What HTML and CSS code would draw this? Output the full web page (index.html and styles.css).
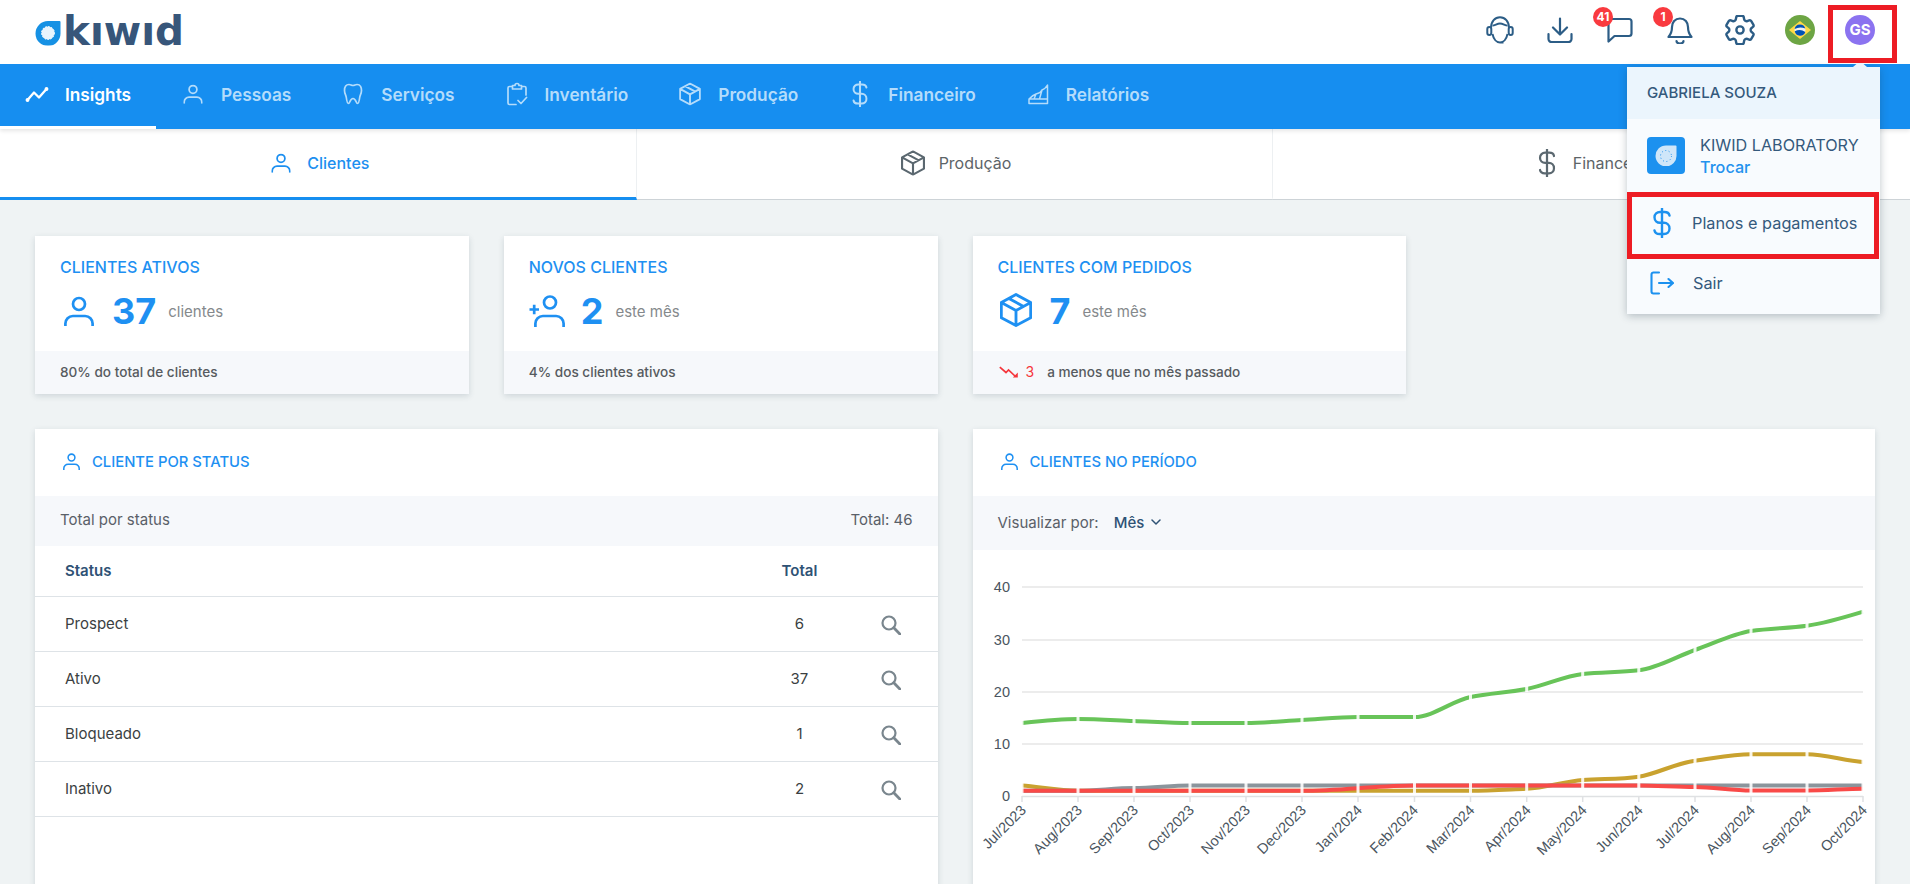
FILE: index.html
```html
<!DOCTYPE html>
<html lang="pt-BR">
<head>
<meta charset="utf-8">
<title>Kiwid - Insights</title>
<link rel="stylesheet" href="styles.css">
</head>
<body>
<svg class="sprite" aria-hidden="true">
  <symbol id="i-person" viewBox="0 0 30 30"><circle cx="15" cy="8" r="6" fill="none" stroke="currentColor" stroke-width="2.7"/><path d="M1.4 30v-2.5a7.5 7.5 0 0 1 7.5-7.5h12.200a7.500 7.500 0 0 1 7.500 7.500V30" fill="none" stroke="currentColor" stroke-width="2.7"/></symbol>
  <symbol id="i-box" viewBox="0 0 34 36"><path d="M17 1.600 32.500 10v16L17 34.400 1.500 26V10zM1.500 10 17 18.500 32.500 10M17 18.500v15.900M9.500 5.800 24.500 14" fill="none" stroke="currentColor" stroke-width="3" stroke-linejoin="round"/></symbol>
  <symbol id="i-dollar" viewBox="0 0 18 30"><path d="M16.500 7.500C16 5 14 4 11.500 4H7C4 4 1.500 6 1.500 9.300S4 14.800 7 14.800h4c3 0 5.500 2.200 5.500 5.700S14 26 11 26H6.500C4 26 2 25 1.500 22.500M9 .5v29" fill="none" stroke="currentColor" stroke-width="2.400" stroke-linecap="round"/></symbol>
  <symbol id="i-search" viewBox="0 0 20 20"><circle cx="8" cy="8" r="6.500" fill="none" stroke="currentColor" stroke-width="2.200"/><path d="m12.800 12.800 6.200 6.400" fill="none" stroke="currentColor" stroke-width="2.800" stroke-linecap="round"/></symbol>
  <symbol id="i-drop" viewBox="0 0 26 25"><path d="M13 .500h11.500a1 1 0 0 1 1 1V12.500A12.500 12.500 0 1 1 13 .500z" fill="currentColor"/></symbol>
</svg>

<header class="topbar">
  <a class="logo" aria-label="Kiwid">
    <svg width="156" height="48" viewBox="35 6 156 48">
      <use href="#i-drop" x="35" y="20.500" width="26" height="25" class="logo-drop"/>
      <circle cx="48" cy="33" r="6.500" fill="#e8f4fd" stroke="#ffffff" stroke-width="1" stroke-dasharray="1.500 1.500"/>
      <text x="63" y="45" class="logo-word">kıwıd</text>
    </svg>
  </a>
  <div class="top-icons">
    <span class="top-icon">
      <svg width="28" height="28" viewBox="0 0 28 28" fill="none" stroke="currentColor" stroke-width="2"><path d="M5 12C5 5.500 9 1.300 14 1.300S23 5.500 23 12"/><rect x="1.300" y="11" width="4" height="8" rx="2"/><rect x="22.700" y="11" width="4" height="8" rx="2"/><path d="M6.500 9.500C9 9.500 11 7.500 14 7.500S19 9.500 21.500 9.500M6.500 18c1 5 4 8.500 7.500 8.500S20.500 23 21.500 18M14 26.500h3.500"/></svg>
    </span>
    <span class="top-icon">
      <svg width="26" height="26" viewBox="0 0 26 26" fill="none" stroke="currentColor" stroke-width="2.200" stroke-linecap="round" stroke-linejoin="round"><path d="M13 1.500V17M6 10.500l7 7 7-7M1.500 17v5a3 3 0 0 0 3 3h17a3 3 0 0 0 3-3v-5"/></svg>
    </span>
    <span class="top-icon">
      <svg width="26" height="26" viewBox="0 0 26 26" fill="none" stroke="currentColor" stroke-width="2.200" stroke-linejoin="round"><path d="M1.500 24.500V4.500a2.500 2.500 0 0 1 2.500-2.500h18a2.500 2.500 0 0 1 2.500 2.500v12a2.500 2.500 0 0 1-2.500 2.500H7.500z"/></svg>
      <b class="badge">41</b>
    </span>
    <span class="top-icon">
      <svg width="26" height="27" viewBox="0 0 26 27" fill="none" stroke="currentColor" stroke-width="2.200" stroke-linejoin="round" stroke-linecap="round"><path d="M13 1.500c-5 0-8 4-8 8.500 0 5-1 7-3.500 10h23C22 17 21 15 21 10c0-4.500-3-8.500-8-8.500zM9.500 24a3.500 2.500 0 0 0 7 0"/></svg>
      <b class="badge">1</b>
    </span>
    <span class="top-icon">
      <svg width="30" height="30" viewBox="2.500 2.500 19 19" fill="none" stroke="currentColor" stroke-width="1.500"><path d="M9.594 3.940c.09-.542.56-.94 1.110-.94h2.593c.55 0 1.020.398 1.110.94l.213 1.281c.063.374.313.686.645.870.074.040.147.083.22.127.324.196.72.257 1.075.124l1.217-.456a1.125 1.125 0 0 1 1.370.49l1.296 2.247a1.125 1.125 0 0 1-.26 1.431l-1.003.827c-.293.24-.438.613-.431.992a6.759 6.759 0 0 1 0 .255c-.007.378.138.75.43.99l1.005.828c.424.35.534.954.26 1.430l-1.298 2.247a1.125 1.125 0 0 1-1.369.491l-1.217-.456c-.355-.133-.75-.072-1.076.124a6.570 6.570 0 0 1-.22.128c-.331.183-.581.495-.644.869l-.213 1.280c-.09.543-.56.941-1.110.941h-2.594c-.55 0-1.020-.398-1.110-.94l-.213-1.281c-.062-.374-.312-.686-.644-.87a6.520 6.520 0 0 1-.22-.127c-.325-.196-.72-.257-1.076-.124l-1.217.456a1.125 1.125 0 0 1-1.369-.49l-1.297-2.247a1.125 1.125 0 0 1 .26-1.431l1.004-.827c.292-.24.437-.613.43-.992a6.932 6.932 0 0 1 0-.255c.007-.378-.138-.75-.43-.99l-1.004-.828a1.125 1.125 0 0 1-.26-1.430l1.297-2.247a1.125 1.125 0 0 1 1.370-.491l1.216.456c.356.133.751.072 1.076-.124.072-.044.146-.087.22-.128.332-.183.582-.495.644-.869l.214-1.281z"/><circle cx="12" cy="12" r="2.300"/></svg>
    </span>
    <span class="top-icon">
      <svg width="30" height="30" viewBox="0 0 30 30"><circle cx="15" cy="15" r="15" fill="#6da544"/><path d="M15 6 26 15 15 24 4 15z" fill="#ffda44"/><circle cx="15" cy="15" r="5.500" fill="#f0f0f0"/><path d="M9.600 14a5.500 5.500 0 0 1 10.700-.5A12 12 0 0 0 9.600 14zM9.700 16.300a10 10 0 0 1 10.600.6 5.500 5.500 0 0 1-10.600-.6z" fill="#0052b4"/></svg>
    </span>
    <span class="top-icon"><span class="avatar">GS</span></span>
  </div>

  <div class="menu">
    <div class="menu-name">GABRIELA SOUZA</div>
    <div class="menu-company">
      <span class="company-logo">
        <svg width="26" height="25" class="company-drop"><use href="#i-drop"/></svg>
        <svg class="company-dots" width="14" height="14" viewBox="0 0 14 14"><circle cx="7" cy="7" r="5.500" fill="none" stroke="#1c91ef" stroke-width="1" stroke-dasharray="1 2.500"/></svg>
      </span>
      <span class="company-text"><span>KIWID LABORATORY</span><a>Trocar</a></span>
    </div>
    <div class="menu-item">
      <svg class="menu-icon" width="18" height="30"><use href="#i-dollar"/></svg>
      <span>Planos e pagamentos</span>
    </div>
    <div class="menu-item menu-last">
      <svg class="menu-icon" width="24" height="24" viewBox="0 0 24 24" fill="none" stroke="currentColor" stroke-width="2.100" stroke-linecap="round" stroke-linejoin="round"><path d="M9 1.500H3.500a2 2 0 0 0-2 2v17a2 2 0 0 0 2 2H9M9 12h14M18.500 8l4.500 4-4.500 4"/></svg>
      <span>Sair</span>
    </div>
  </div>
  <i class="mark mark-avatar"></i>
  <i class="mark mark-plans"></i>
</header>

<nav class="nav">
  <a class="nav-item active">
    <svg class="nav-icon" viewBox="0 0 24 24" fill="none" stroke="currentColor" stroke-width="2.300" stroke-linecap="round" stroke-linejoin="round"><path d="M2.500 18 9 10.500l5 5 7.500-8.500"/><circle cx="2.500" cy="18" r=".8"/><circle cx="21.500" cy="7" r=".8"/></svg>
    Insights
  </a>
  <a class="nav-item"><svg class="nav-icon" viewBox="-3.500 -3.500 37 37"><use href="#i-person" width="30" height="30"/></svg>Pessoas</a>
  <a class="nav-item">
    <svg class="nav-icon" viewBox="0 0 24 24" fill="none" stroke="currentColor" stroke-width="1.700" stroke-linejoin="round"><path d="M8 2.500C4.500 2.500 3.500 5.500 3.500 8.500c0 3 1.500 4.500 1.800 7 .4 3 1 6 2.200 6 1.500 0 1.500-5 4.500-5s3 5 4.500 5c1.200 0 1.800-3 2.200-6 .3-2.500 1.800-4 1.800-7 0-3-1-6-4.500-6-1.500 0-2.500 1-4 1s-2.500-1-4-1z"/></svg>
    Serviços
  </a>
  <a class="nav-item">
    <svg class="nav-icon" viewBox="0 0 24 24" fill="none" stroke="currentColor" stroke-width="1.700" stroke-linecap="round" stroke-linejoin="round"><path d="M7.500 4.500H4.500a1.500 1.500 0 0 0-1.500 1.500v15a1.500 1.500 0 0 0 1.500 1.500H11M16.500 4.500h3A1.500 1.500 0 0 1 21 6v7M7.500 3.500h2.500a2 2 0 0 1 4 0h2.500v3.500h-9zM13 18.500l3 3 5.500-6"/></svg>
    Inventário
  </a>
  <a class="nav-item"><svg class="nav-icon" viewBox="-1.750 -.75 37.500 37.500"><use href="#i-box" width="34" height="36"/></svg>Produção</a>
  <a class="nav-item"><svg class="nav-icon tall" viewBox="0 0 18 30"><use href="#i-dollar" width="18" height="30"/></svg>Financeiro</a>
  <a class="nav-item">
    <svg class="nav-icon" viewBox="0 0 24 24" fill="none" stroke="currentColor" stroke-width="1.500" stroke-linejoin="round"><path d="M3 21.500h18.500V3c-2 3.500-3 4-5.500 5-1.500 3-3 3.500-6 4-3 1-5 3-7 5zM3 17h18.500M10 12l-2 5M16 8l-2.500 9"/></svg>
    Relatórios
  </a>
</nav>

<div class="tabs">
  <a class="tab current"><svg class="tab-icon" viewBox="-3.500 -3.500 37 37"><use href="#i-person" width="30" height="30"/></svg>Clientes</a>
  <a class="tab"><svg class="tab-icon tab-gray tall" viewBox="0 0 34 36"><use href="#i-box" width="34" height="36"/></svg>Produção</a>
  <a class="tab"><svg class="tab-icon tab-gray tall" viewBox="0 0 18 30"><use href="#i-dollar" width="18" height="30"/></svg>Financeiro</a>
</div>

<main class="dash">
  <section class="card">
    <div class="card-main">
      <h3 class="card-title">CLIENTES ATIVOS</h3>
      <div class="card-value">
        <svg class="card-icon" viewBox="-4 -3 36 36"><use href="#i-person" width="30" height="30"/></svg>
        <strong>37</strong><span>clientes</span>
      </div>
    </div>
    <div class="card-foot">80% do total de clientes</div>
  </section>
  <section class="card">
    <div class="card-main">
      <h3 class="card-title">NOVOS CLIENTES</h3>
      <div class="card-value">
        <svg class="card-icon" viewBox="0 0 36 36" fill="none" stroke="currentColor" stroke-width="2.700"><circle cx="21" cy="9.500" r="6"/><path d="M6.400 34v-3.500a7.500 7.500 0 0 1 7.500-7.500h13.200a7.500 7.500 0 0 1 7.500 7.500V34M.5 16.500h9.500M5.200 11.800v9.500"/></svg>
        <strong>2</strong><span>este mês</span>
      </div>
    </div>
    <div class="card-foot">4% dos clientes ativos</div>
  </section>
  <section class="card">
    <div class="card-main">
      <h3 class="card-title">CLIENTES COM PEDIDOS</h3>
      <div class="card-value">
        <svg class="card-icon" viewBox="-2 0 38 38"><use href="#i-box" width="34" height="36"/></svg>
        <strong>7</strong><span>este mês</span>
      </div>
    </div>
    <div class="card-foot">
      <svg class="trend" width="20" height="12" viewBox="0 0 20 12" fill="none" stroke="currentColor" stroke-width="1.700"><path d="M.8 1.200 7 6.500l2.500-2.500 7 6.500"/><path d="M18.800 6.500v5h-5z" fill="currentColor" stroke="none"/></svg>
      <span class="trend-num">3</span>a menos que no mês passado
    </div>
  </section>

  <section class="panel panel-left">
    <h3 class="panel-title"><svg viewBox="0 0 30 30" width="17" height="17"><use href="#i-person"/></svg>CLIENTE POR STATUS</h3>
    <div class="panel-bar"><span>Total por status</span><span>Total: 46</span></div>
    <table class="status-table">
      <thead><tr><th>Status</th><th class="num">Total</th><th class="act"></th></tr></thead>
      <tbody>
        <tr><td>Prospect</td><td class="num">6</td><td class="act"><svg width="20" height="20"><use href="#i-search"/></svg></td></tr>
        <tr><td>Ativo</td><td class="num">37</td><td class="act"><svg width="20" height="20"><use href="#i-search"/></svg></td></tr>
        <tr><td>Bloqueado</td><td class="num">1</td><td class="act"><svg width="20" height="20"><use href="#i-search"/></svg></td></tr>
        <tr><td>Inativo</td><td class="num">2</td><td class="act"><svg width="20" height="20"><use href="#i-search"/></svg></td></tr>
      </tbody>
    </table>
  </section>

  <section class="panel panel-right">
    <h3 class="panel-title"><svg viewBox="0 0 30 30" width="17" height="17"><use href="#i-person"/></svg>CLIENTES NO PERÍODO</h3>
    <div class="panel-bar panel-bar-tall"><span>Visualizar por:</span>
      <span class="select">Mês<svg width="10" height="6" viewBox="0 0 10 6" fill="none" stroke="currentColor" stroke-width="1.500" stroke-linecap="round" stroke-linejoin="round"><path d="m1 1 4 4 4-4"/></svg></span>
    </div>
    <svg class="chart" width="902" height="334" viewBox="973 550 902 334">
      <g class="grid">
        <path d="M1022 587H1863M1022 640H1863M1022 692H1863M1022 744H1863"/>
        <path class="axis" d="M1022 796.500H1863M1022 796v6M1078 796v6M1134 796v6M1190 796v6M1246 796v6M1302 796v6M1358 796v6M1414.500 796v6M1470.500 796v6M1526.700 796v6M1582.700 796v6M1638.800 796v6M1695 796v6M1751 796v6M1807 796v6M1863 796v6"/>
      </g>
      <g class="y-labels">
        <text x="1010" y="592">40</text><text x="1010" y="645">30</text><text x="1010" y="697">20</text><text x="1010" y="749">10</text><text x="1010" y="801">0</text>
      </g>
      <path class="line gold" d="M1022 785.500C1040 787 1060 790.500 1078 790.800H1470.500C1489 790.800 1508 789.500 1526.700 788.700C1545 788 1564 781.500 1582.700 780C1601 778.500 1620 779.500 1638.800 776.700C1657 773.900 1676 763 1695 760.700C1713 758.500 1732 754.300 1751 754.300H1807C1825 754.300 1844 760.500 1863 762"/>
      <path class="line gray" d="M1022 790.800H1078C1096 790.800 1115 788 1134 788C1153 788 1171 785.500 1190 785.500H1863"/>
      <path class="line red" d="M1022 790.800H1302C1320 790.800 1340 789.500 1358 788.200C1376 787 1396 785.500 1414.500 785.500H1638.800C1657 785.500 1676 787 1695 787C1713 787 1732 790.500 1751 790.500H1807C1825 790.500 1844 789 1863 788.700"/>
      <path class="line green" d="M1022 723C1040.700 721 1059.300 719 1078 719C1096.700 719 1115.300 720.300 1134 721C1152.700 721.700 1171.300 723 1190 723C1208.700 723 1227.300 723 1246 723C1264.700 723 1283.300 721 1302 720C1320.700 719 1339.300 717 1358 717C1376.700 717 1395.800 717 1414.500 717C1433.200 717 1451.800 700.800 1470.500 697C1489.200 693.200 1508 692.500 1526.700 689C1545.400 685.500 1564 676 1582.700 674C1601.400 672 1620.100 672.400 1638.800 670.300C1657.500 668.200 1676.300 656.500 1695 650C1713.700 643.500 1732.300 633.800 1751 631C1769.700 628.200 1788.300 628.300 1807 625.700C1825.700 623.100 1844.300 617.400 1863 611.700"/>
      <path class="dots" d="M1022 720v6M1078 716v6M1134 718v6M1190 720v6M1246 720v6M1302 717v6M1358 714v6M1414.500 714v6M1470.500 694v6M1526.700 686v6M1582.700 671v6M1638.800 667v6M1695 647v6M1751 628v6M1807 623v6M1863 609v6"/>
      <path class="dots" d="M1022 783v11M1078 783v11M1134 783v11M1190 783v11M1246 783v11M1302 783v11M1358 783v11M1414.500 783v11M1470.500 783v11M1526.700 783v11M1582.700 777v17M1638.800 773v17M1695 758v6M1695 783v11M1751 751v6M1751 783v11M1807 751v6M1807 783v11M1863 759v6M1863 783v11"/>
      <g class="x-labels">
        <text transform="translate(1027 811) rotate(-45)">Jul/2023</text>
        <text transform="translate(1083 811) rotate(-45)">Aug/2023</text>
        <text transform="translate(1139 811) rotate(-45)">Sep/2023</text>
        <text transform="translate(1195 811) rotate(-45)">Oct/2023</text>
        <text transform="translate(1251 811) rotate(-45)">Nov/2023</text>
        <text transform="translate(1307 811) rotate(-45)">Dec/2023</text>
        <text transform="translate(1363 811) rotate(-45)">Jan/2024</text>
        <text transform="translate(1419 811) rotate(-45)">Feb/2024</text>
        <text transform="translate(1475.500 811) rotate(-45)">Mar/2024</text>
        <text transform="translate(1531.700 811) rotate(-45)">Apr/2024</text>
        <text transform="translate(1587.700 811) rotate(-45)">May/2024</text>
        <text transform="translate(1643.800 811) rotate(-45)">Jun/2024</text>
        <text transform="translate(1700 811) rotate(-45)">Jul/2024</text>
        <text transform="translate(1756 811) rotate(-45)">Aug/2024</text>
        <text transform="translate(1812 811) rotate(-45)">Sep/2024</text>
        <text transform="translate(1868 811) rotate(-45)">Oct/2024</text>
      </g>
    </svg>
  </section>
</main>
</body>
</html>
```
FILE: styles.css
```css
* { box-sizing: border-box; }
html, body { margin: 0; height: 884px; overflow: hidden; }
body { background: #eff3f4; font-family: Inter, "Noto Sans", sans-serif; color: #333; }
.sprite { width: 0; height: 0; position: absolute; }

.topbar { height: 64px; background: #fff; display: flex; align-items: center; justify-content: space-between; padding: 0 20px 0 35px; position: relative; z-index: 5; }
.logo { display: block; height: 48px; margin-top: -4px; }
.logo svg { display: block; }
.logo-drop { color: #1691e4; }
.logo-word { font: 700 40.500px "DejaVu Sans", sans-serif; fill: #37567a; }
.top-icons { display: flex; }
.top-icon { width: 60px; height: 60px; display: flex; align-items: center; justify-content: center; color: #2c5d86; position: relative; margin-top: -4px; }
.badge { position: absolute; left: 3px; top: 7px; width: 20px; height: 20px; border-radius: 50%; background: #f93a3f; color: #fff; font: 700 12px/20px Inter, sans-serif; text-align: center; }
.avatar { width: 30px; height: 30px; border-radius: 50%; background: #8b73f0; color: #fff; font: 700 15px/30px Inter, sans-serif; text-align: center; }

.mark { position: absolute; border: 5px solid #ed1c24; pointer-events: none; }
.mark-avatar { left: 1828px; top: 5px; width: 69px; height: 58px; }
.mark-plans { left: 1627px; top: 192px; width: 252px; height: 67px; }

.menu { position: absolute; left: 1627px; top: 67px; width: 253px; height: 247px; background: #f8fbfe; box-shadow: 0 2px 8px rgba(30, 50, 70, .28); color: #34597c; }
.menu::before { content: ""; position: absolute; right: 13px; top: -6px; border: 7px solid transparent; border-top: 0; border-bottom: 6px solid #ebf5fd; }
.menu-name { height: 52px; background: #ebf5fd; padding: 0 20px; font-size: 15px; font-weight: 500; line-height: 51px; white-space: nowrap; }
.menu-company { display: flex; gap: 15px; padding: 18px 20px 0; height: 73px; }
.company-logo { width: 38px; height: 37px; border-radius: 4px; background: #1c91ef; position: relative; display: block; flex: none; }
.company-drop { position: absolute; left: 8px; top: 8px; width: 22px; height: 21px; color: #cfe6f9; }
.company-dots { position: absolute; left: 12px; top: 11.500px; }
.company-text { display: flex; flex-direction: column; font-size: 16.200px; line-height: 22px; white-space: nowrap; margin-top: -3px; }
.company-text a { color: #2392ee; font-weight: 500; }
.menu-item { display: flex; align-items: center; height: 67px; font-size: 16.300px; font-weight: 400; padding-left: 26px; padding-bottom: 5px; white-space: nowrap; }
.menu-icon { color: #1c91ef; flex: none; margin-right: 21px; }
.menu-last { height: 55px; padding: 0 0 0 23px; margin-top: -4px; }
.menu-last .menu-icon { margin-right: 19px; margin-left: 0; }

.nav { height: 65px; background: #168ef0; display: flex; position: relative; box-shadow: 0 2px 4px rgba(0, 0, 0, .1); z-index: 2; }
.nav-item { display: flex; align-items: center; gap: 16px; padding: 0 25px 2px; height: 65px; color: #b4dcfb; font-size: 17.250px; font-weight: 600; border-bottom: 3px solid transparent; white-space: nowrap; }
.nav-item.active { color: #fff; border-bottom-color: #fff; }
.nav-icon { width: 24px; height: 24px; flex: none; }
.nav-icon.tall { height: 26px; }

.tabs { height: 71px; background: #fff; display: grid; grid-template-columns: repeat(3, 1fr); border-bottom: 1px solid #cdd3d7; }
.tab { display: flex; align-items: center; justify-content: center; gap: 14px; color: #5d6468; font-size: 16px; height: 71px; padding-left: 3px; border-right: 1px solid #edf0f2; border-bottom: 3px solid transparent; }
.tab:last-child { border-right: 0; }
.tab.current { color: #1c8ff0; font-weight: 500; border-bottom-color: #168ef0; }
.tab-icon { width: 24px; height: 24px; color: #1c8ff0; flex: none; }
.tab-gray { color: #5b6870; }
.tab-icon.tall { height: 28px; }

.dash { display: grid; grid-template-columns: repeat(4, 1fr); gap: 35px; padding: 36px 35px 0; }
.card { background: #fff; height: 158px; box-shadow: 0 2px 6px rgba(40, 60, 80, .16); display: flex; flex-direction: column; }
.card-main { height: 115px; padding: 22px 25px 0; }
.card-title { margin: 0 0 15px; font-size: 16px; line-height: 18px; font-weight: 500; color: #1e90f2; white-space: nowrap; }
.card-value { display: flex; align-items: center; height: 40px; }
.card-icon { width: 36px; height: 36px; color: #1e90f2; flex: none; margin-right: 16px; }
.card-value strong { font-size: 36px; font-weight: 700; color: #1e90f2; line-height: 40px; }
.card-value span { font-size: 15px; color: #85898c; margin-left: 12px; }
.card-foot { height: 43px; background: #f6f8fb; padding: 0 25px 2px; display: flex; align-items: center; font-size: 13.600px; font-weight: 500; color: #565b60; }
.trend { color: #f5353b; margin-left: 1px; flex: none; }
.trend-num { color: #f5353b; margin: 0 13px 0 7px; font-weight: 400; font-size: 14px; }

.panel { grid-column: span 2; background: #fff; height: 520px; box-shadow: 0 2px 6px rgba(40, 60, 80, .16); }
.panel-title { display: flex; align-items: center; height: 67px; margin: 0; padding: 0 0 2px 28px; gap: 12px; font-size: 14.800px; font-weight: 500; color: #1e90f2; }
.panel-title svg { flex: none; }
.panel-bar { height: 50px; background: #f6f8fb; display: flex; justify-content: space-between; align-items: center; padding: 0 25px 3px; font-size: 15px; color: #5a6068; }
.panel-bar-tall { height: 54px; justify-content: flex-start; gap: 15px; padding-bottom: 2px; }
.select { display: flex; align-items: center; gap: 7px; color: #2f5275; font-weight: 500; }

.status-table { width: 100%; border-collapse: collapse; font-size: 15px; table-layout: fixed; }
.status-table th { height: 50px; text-align: left; font-weight: 600; color: #2f5275; padding: 0 0 0 30px; border-bottom: 1px solid #dee3e7; }
.status-table td { height: 55px; padding: 0 0 0 30px; border-bottom: 1px solid #dee3e7; color: #3b3f42; }
.status-table .num { width: 90px; padding: 0; text-align: center; }
.status-table .act { width: 93px; padding: 0; text-align: center; color: #7a868e; }
.status-table svg { display: block; margin: 2px auto 0; }

.chart { display: block; }
.grid path { fill: none; stroke: #e6e6e6; stroke-width: 1.500; }
.grid .axis { stroke: #dfe1e3; }
.y-labels text { font: 14.500px "Liberation Sans", sans-serif; fill: #4a5560; text-anchor: end; }
.x-labels text { font: 14.500px "Liberation Sans", sans-serif; fill: #4a5560; text-anchor: end; }
.line { fill: none; stroke-width: 4; }
.gold { stroke: #c9a22f; }
.gray { stroke: #8b959c; }
.red { stroke: #f94a48; }
.green { stroke: #68c459; }
.dots { fill: none; stroke: rgba(255, 255, 255, .88); stroke-width: 3; }
```
